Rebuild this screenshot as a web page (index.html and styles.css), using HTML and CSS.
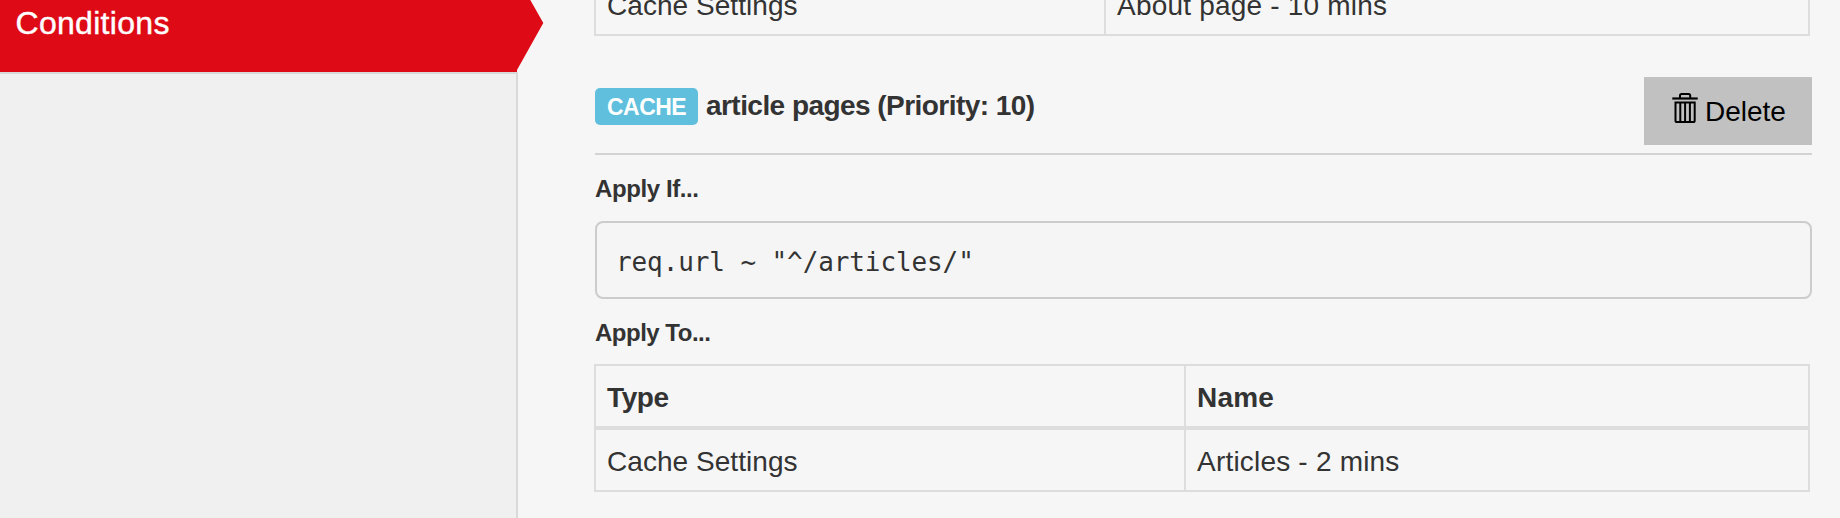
FILE: index.html
```html
<!DOCTYPE html>
<html lang="en">
<head>
<meta charset="utf-8">
<title>Conditions</title>
<link rel="stylesheet" href="styles.css">
</head>
<body>
<div class="page">
  <nav class="sidebar">
    <a class="nav-active"><span class="nav-label">Conditions</span>
      <svg class="nav-arrow" width="28" height="72" viewBox="0 0 28 72"><path d="M0 0H14.3L27.3 23L1 70V72H0Z"/></svg>
    </a>
    <div class="sidebar-rest"></div>
  </nav>
  <main class="main">
    <table class="grid grid-first">
      <tr><td class="col-about">Cache Settings</td><td class="name">About page - 10 mins</td></tr>
    </table>
    <header class="condition">
      <span class="badge">CACHE</span>
      <h4 class="title">article pages (Priority: 10)</h4>
      <button class="delete">
        <svg class="trash" width="26" height="32" viewBox="0 0 26 32" fill="none" stroke="#000" stroke-width="2">
          <path d="M0.3 7.5H25.7" stroke-width="2.2"/>
          <path d="M8 7V4.6Q8 3 9.6 3H16.6Q18.2 3 18.2 4.6V7"/>
          <path d="M3.5 11.5H22.7V29.4Q22.7 31 21.1 31H5.1Q3.5 31 3.5 29.4Z"/>
          <path d="M8.3 12V31M13.1 12V31M17.9 12V31"/>
        </svg>
        <span class="delete-text">Delete</span>
      </button>
    </header>
    <h5 class="label label-if">Apply If...</h5>
    <pre class="code">req.url ~ "^/articles/"</pre>
    <h5 class="label label-to">Apply To...</h5>
    <table class="grid">
      <tr><th class="col-type">Type</th><th class="name-head">Name</th></tr>
      <tr><td>Cache Settings</td><td class="name">Articles - 2 mins</td></tr>
    </table>
  </main>
</div>
</body>
</html>
```
FILE: styles.css
```css
* { box-sizing: border-box; }
body {
  margin: 0;
  background: #f6f6f6;
  color: #333;
  font: 28px/40px "Liberation Sans", Arial, sans-serif;
}
.page { display: flex; height: 518px; overflow: hidden; }
.sidebar { display: flex; flex-direction: column; width: 518px; flex: none; }
.nav-active {
  position: relative;
  height: 72px;
  margin-right: 2px;
  flex: none;
  background: #de0b17;
  color: #fff;
  font-size: 32px;
}
.nav-label {
  display: block;
  padding: 3px 0 0 15.5px;
  letter-spacing: 0.3px;
  -webkit-text-stroke: 0.4px #fff;
}
.nav-arrow { position: absolute; left: 516px; top: 0; fill: #de0b17; }
.sidebar-rest {
  flex: 1;
  background: #f0f0f0;
  border-top: 2px solid #d9d9d9;
  border-right: 2px solid #d9d9d9;
}
.main { width: 1218px; margin: -28px 0 0 76px; }
.grid {
  width: 1216px;
  table-layout: fixed;
  border-collapse: separate;
  border-spacing: 0;
  border: solid #ddd;
  border-width: 2px 0 0 2px;
}
.grid th, .grid td {
  padding: 12px 11px 8px;
  border: solid #ddd;
  border-width: 0 2px 2px 0;
  text-align: left;
}
.grid td { letter-spacing: 0.05px; }
.grid .name { letter-spacing: 0.2px; }
.grid th { border-bottom-width: 4px; letter-spacing: -0.4px; }
.grid .name-head { letter-spacing: 0.2px; }
.col-about { width: 510px; }
.col-type { width: 590px; }
.condition {
  display: flex;
  margin: 41px 0 0 1px;
  height: 78px;
  border-bottom: 2px solid #d3d3d3;
}
.badge {
  width: 103px;
  height: 37px;
  margin-top: 11px;
  border-radius: 5px;
  background: #5fbfdc;
  color: #fff;
  font-size: 23px;
  font-weight: bold;
  line-height: 39px;
  letter-spacing: -0.6px;
  text-align: center;
}
.title { margin: 9px 0 0 8px; letter-spacing: -0.55px; }
.delete {
  display: flex;
  width: 168px;
  height: 68px;
  margin-left: auto;
  padding: 14px 0 0 28px;
  border: 0;
  background: #c1c1c1;
  color: #000;
  font: inherit;
}
.delete-text { margin: 1px 0 0 7px; }
.label { margin: 0 0 0 1px; font-size: 24px; line-height: 34px; letter-spacing: -0.4px; }
.label-if { padding-top: 17px; height: 66px; }
.label-to { padding-top: 17px; height: 65px; letter-spacing: -0.5px; }
.code {
  margin: 0 0 0 1px;
  height: 78px;
  padding: 20px 19px 0;
  border: 2px solid #ccc;
  border-radius: 8px;
  background: #f5f5f5;
  font: 26px/38px "DejaVu Sans Mono", monospace;
  letter-spacing: -0.1px;
}
```
